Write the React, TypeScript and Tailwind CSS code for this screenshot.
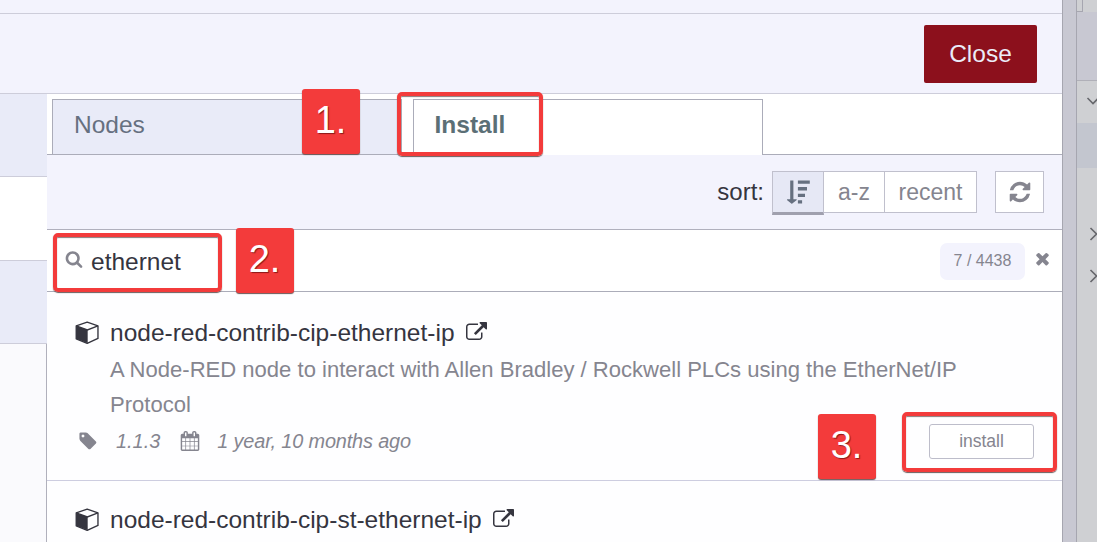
import React from "react";

type IconProps = { className?: string };

function Glyph({ className = "", d }: IconProps & { d: string }) {
  return (
    <svg viewBox="0 0 1792 1792" fill="currentColor" className={`shrink-0 ${className}`} aria-hidden="true">
      <path d={d} />
    </svg>
  );
}

const PATHS = {
  search:
    "M1216 832q0-185-131.5-316.5t-316.5-131.5-316.5 131.5-131.5 316.5 131.5 316.5 316.5 131.5 316.5-131.5 131.5-316.5zm512 832q0 52-38 90t-90 38q-54 0-90-38l-343-342q-179 124-399 124-143 0-273.5-55.5t-225-150-150-225-55.5-273.5 55.5-273.5 150-225 225-150 273.5-55.5 273.5 55.5 225 150 150 225 55.5 273.5q0 220-124 399l343 343q37 37 37 90z",
  times:
    "M1490 1322q0 40-28 68l-136 136q-28 28-68 28t-68-28l-294-294-294 294q-28 28-68 28t-68-28l-136-136q-28-28-28-68t28-68l294-294-294-294q-28-28-28-68t28-68l136-136q28-28 68-28t68 28l294 294 294-294q28-28 68-28t68 28l136 136q28 28 28 68t-28 68l-294 294 294 294q28 28 28 68z",
  refresh:
    "M1639 1056q0 5-1 7-64 268-268 434.5t-478 166.5q-146 0-282.5-55t-243.5-157l-129 129q-19 19-45 19t-45-19-19-45v-448q0-26 19-45t45-19h448q26 0 45 19t19 45-19 45l-137 137q71 66 161 102t187 36q134 0 250-65t186-179q11-17 53-117 8-23 30-23h192q13 0 22.5 9.5t9.5 22.5zm25-800v448q0 26-19 45t-45 19h-448q-26 0-45-19t-19-45 19-45l138-138q-148-137-349-137-134 0-250 65t-186 179q-11 17-53 117-8 23-30 23h-199q-13 0-22.5-9.5t-9.5-22.5v-7q65-268 270-434.5t480-166.5q146 0 284 55.5t245 156.5l130-129q19-19 45-19t45 19 19 45z",
  external:
    "M1408 928v320q0 119-84.5 203.5t-203.5 84.5h-832q-119 0-203.5-84.5t-84.5-203.5v-832q0-119 84.5-203.5t203.5-84.5h704q14 0 23 9t9 23v64q0 14-9 23t-23 9h-704q-66 0-113 47t-47 113v832q0 66 47 113t113 47h832q66 0 113-47t47-113v-320q0-14 9-23t23-9h64q14 0 23 9t9 23zm384-864v512q0 26-19 45t-45 19-45-19l-176-176-652 652q-10 10-23 10t-23-10l-114-114q-10-10-10-23t10-23l652-652-176-176q-19-19-19-45t19-45 45-19h512q26 0 45 19t19 45z",
  calendar:
    "M192 1664h288v-288h-288v288zm352 0h320v-288h-320v288zm-352-352h288v-320h-288v320zm352 0h320v-320h-320v320zm-352-384h288v-288h-288v288zm736 736h320v-288h-320v288zm-384-736h320v-288h-320v288zm768 736h288v-288h-288v288zm-384-352h320v-320h-320v320zm-352-864v-288q0-13-9.5-22.5t-22.5-9.5h-64q-13 0-22.5 9.5t-9.5 22.5v288q0 13 9.5 22.5t22.5 9.5h64q13 0 22.5-9.5t9.5-22.5zm736 864h288v-320h-288v320zm-384-384h320v-288h-320v288zm384 0h288v-288h-288v288zm32-480v-288q0-13-9.5-22.5t-22.5-9.5h-64q-13 0-22.5 9.5t-9.5 22.5v288q0 13 9.5 22.5t22.5 9.5h64q13 0 22.5-9.5t9.5-22.5zm384-64v1280q0 52-38 90t-90 38h-1408q-52 0-90-38t-38-90v-1280q0-52 38-90t90-38h128v-96q0-66 47-113t113-47h64q66 0 113 47t47 113v96h384v-96q0-66 47-113t113-47h64q66 0 113 47t47 113v96h128q52 0 90 38t38 90z",
  tag: "M576 448q0-53-37.5-90.5t-90.5-37.5-90.5 37.5-37.5 90.5 37.5 90.5 90.5 37.5 90.5-37.5 37.5-90.5zm1067 576q0 53-37 90l-491 492q-39 37-91 37-53 0-90-37l-715-716q-38-37-64.5-101t-26.5-117v-416q0-52 38-90t90-38h416q53 0 117 26.5t102 64.5l715 714q37 39 37 91z",
};

function Cube({ className = "" }: IconProps) {
  return (
    <svg viewBox="0 0 24 24" className={`shrink-0 ${className}`} aria-hidden="true">
      <path d="M12.2 1.2 23.2 4.9v12.9L12.2 22.8 1 18.2V4.9Z" fill="none" stroke="currentColor" strokeWidth="1.4" strokeLinejoin="round" />
      <path d="M1 5l11.7 4.2v13.6L1 18.2Z" fill="currentColor" />
      <path d="M1 5l11.4 4.1L23.2 5" fill="none" stroke="currentColor" strokeWidth="1.4" />
    </svg>
  );
}

function SortAmount({ className = "" }: IconProps) {
  return (
    <svg viewBox="0 0 23 24" fill="currentColor" className={`shrink-0 ${className}`} aria-hidden="true">
      <path d="M3.2 0.4h3.2v18.8h3q.7.4.1 1L5.3 23.5q-.5.4-1 0L.2 20.2q-.6-.6.1-1h2.9Z" />
      <path d="M10.9 0.4h11.9v3.4H10.9zM10.9 7.1h9.1v3.3h-9.1zM10.9 13.7h7.1V17h-7.1zM10.9 20.3h4.2v3.1h-4.2z" />
    </svg>
  );
}

function PackageTitle({ name }: { name: string }) {
  return (
    <div className="flex h-9 items-center text-[24.5px] leading-9 text-[#35353f]">
      <Cube className="h-[23.5px] w-6" />
      <span className="ml-[11px] whitespace-nowrap">{name}</span>
      <Glyph d={PATHS.external} className="-mt-px ml-[11px] h-[21px] w-[21px]" />
    </div>
  );
}

function Badge({ children, className }: { children: string; className: string }) {
  return (
    <div
      className={`absolute h-[65px] w-[58px] rounded-[3px] bg-[#f33b3b] pt-1 text-center text-[38px] leading-[54px] text-white shadow-[0_1px_1px_#6b5555] [text-shadow:1px_1px_1px_rgba(70,0,0,0.6)] ${className}`}
    >
      {children}
    </div>
  );
}

function Outline({ className }: { className: string }) {
  return (
    <div className={`absolute rounded-[5px] border-4 border-[#f33b3b] shadow-[0_1px_1px_#6b5b5b,inset_0_1px_1px_#8a7a7a] ${className}`} />
  );
}

function Chevron({ className = "", d }: IconProps & { d: string }) {
  return (
    <svg viewBox="0 0 14 14" fill="none" stroke="#66676c" strokeWidth="1.6" className={`shrink-0 ${className}`} aria-hidden="true">
      <path d={d} />
    </svg>
  );
}

function SideColumn() {
  return (
    <nav className="flex w-[47px] shrink-0 flex-col">
      <div className="h-[83px] border-b border-[#cdcdda] bg-[#e9ebf8]" />
      <div className="h-[84px] border-b border-[#cdcdda] bg-white" />
      <div className="h-[83px] border-b border-[#cdcdda] bg-[#e9ebf8]" />
      <div className="flex-1 border-r border-[#b0b0bc] bg-[#fafafd]" />
    </nav>
  );
}

function Tabs() {
  return (
    <div className="flex h-[61px] shrink-0 pt-[5px]">
      <div className="w-[5px] border-b border-[#abacb9]" />
      <div className="w-[350px] border border-[#abacb9] bg-[#e9ebf8] pl-[21px] text-[24.5px] leading-[49px] text-[#667080]">Nodes</div>
      <div className="w-[11px] border-b border-[#abacb9]" />
      <div className="w-[350px] border border-b-0 border-[#abacb9] bg-white pl-[20.5px] text-[24.5px] font-bold leading-[49px] text-[#5b6f76]">Install</div>
      <div className="flex-1 border-b border-[#abacb9]" />
    </div>
  );
}

function SortBar() {
  return (
    <div className="flex h-[75px] shrink-0 items-start justify-end border-b border-[#b0b0bd] bg-[#f3f3fd] pr-[18px] pt-4 text-[23px] text-[#85858f]">
      <span className="mr-2 text-[24px] leading-[42px] text-[#35353f]">sort:</span>
      <div className="flex h-11">
        <button className="flex h-11 w-[52px] items-center justify-center border border-b-[3px] border-[#c0c0cd] border-b-[#a0a0ae] bg-[#e6e8f5] text-[#667080]">
          <SortAmount className="-mt-px h-6 w-[23px]" />
        </button>
        <button className="h-[42px] w-[61px] border-y border-r border-[#c0c0cd] bg-white leading-10">a-z</button>
        <button className="h-[42px] w-[92px] border-y border-r border-[#c0c0cd] bg-white leading-10">recent</button>
      </div>
      <button className="ml-[18px] flex h-[42px] w-[49px] items-center justify-center border border-[#c0c0cd] bg-white">
        <Glyph d={PATHS.refresh} className="h-6 w-6" />
      </button>
    </div>
  );
}

function SearchBar() {
  return (
    <div className="flex h-[62px] shrink-0 items-center border-b border-[#abacb9] bg-white pl-[18px] pr-[10px]">
      <Glyph d={PATHS.search} className="-mt-1 h-[18px] w-[18px] text-[#85858f]" />
      <span className="ml-2 mt-[2px] text-[24.5px] leading-9 text-[#35353f]">ethernet</span>
      <span className="ml-auto mt-[2px] h-[37px] w-[85px] rounded-[7px] bg-[#f3f3fd] text-center text-[16px] leading-[36px] text-[#85858f]">7 / 4438</span>
      <Glyph d={PATHS.times} className="-mt-1 ml-2 h-[19px] w-[19px] text-[#85858f]" />
    </div>
  );
}

function Results() {
  return (
    <div className="flex flex-1 flex-col bg-[#fefeff]">
      <div className="h-[189px] shrink-0 border-b border-[#cdcde0] pl-7 pt-[23px]">
        <PackageTitle name="node-red-contrib-cip-ethernet-ip" />
        <p className="ml-[35px] mt-[1px] w-[870px] text-[22.06px] leading-[35px] text-[#85858f]">
          A Node-RED node to interact with Allen Bradley / Rockwell PLCs using the EtherNet/IP Protocol
        </p>
        <div className="mt-px flex h-9 items-center pr-7 text-[19.9px] italic text-[#85858f]">
          <Glyph d={PATHS.tag} className="ml-[3px] h-5 w-5" />
          <span className="ml-[18px] mt-[2px]">1.1.3</span>
          <Glyph d={PATHS.calendar} className="ml-5 h-5 w-5" />
          <span className="ml-[17px] mt-[2px] tracking-[-0.15px]">1 year, 10 months ago</span>
          <button className="ml-auto h-[35px] w-[105px] rounded-[3px] border border-[#bdbdca] bg-white text-[17.5px] not-italic leading-[30px]">install</button>
        </div>
      </div>
      <div className="pl-7 pt-[21px]">
        <PackageTitle name="node-red-contrib-cip-st-ethernet-ip" />
      </div>
    </div>
  );
}

function Workspace() {
  return (
    <aside className="flex w-[35px] shrink-0">
      <div className="w-[15px] border-x border-[#a6a6b0] bg-[#c8c8d2]" />
      <div className="flex w-5 flex-col overflow-hidden bg-[#cfd0d3]">
        <div className="h-3 w-[6px] shrink-0 border-b border-r border-[#a6a6b0]" />
        <div className="h-[69px] shrink-0 border-b border-[#b0b0b8] bg-[#c8c8d2]" />
        <div className="h-[42px] shrink-0 pl-[9px] pt-[13px]">
          <Chevron className="h-[14px] w-[14px]" d="M1.5 4 7 9.5 12.5 4" />
        </div>
        <div className="h-[45px] shrink-0 bg-[#c3c6cf]" />
        <div className="flex flex-col gap-7 pl-3 pt-[59px]">
          <Chevron className="h-[14px] w-[14px]" d="M1.5 1 7.5 7 1.5 13" />
          <Chevron className="h-[14px] w-[14px]" d="M1.5 1 7.5 7 1.5 13" />
        </div>
      </div>
    </aside>
  );
}

export default function App() {
  return (
    <div className="relative flex h-[542px] w-[1097px] overflow-hidden bg-white font-['Liberation_Sans',Arial,sans-serif]">
      <main className="flex w-[1062px] shrink-0 flex-col">
        <div className="h-[14px] shrink-0 border-b border-[#cdcdda] bg-[#f3f3fd]" />
        <header className="flex h-20 shrink-0 items-start justify-end border-b border-[#cdcdda] bg-[#f3f3fd] pr-[25px] pt-[11px]">
          <button className="h-[58px] w-[113px] rounded-[2px] bg-[#8c101c] text-[24.5px] leading-[56px] text-[#ebebf8]">Close</button>
        </header>
        <div className="flex min-h-0 flex-1">
          <SideColumn />
          <section className="flex min-w-0 flex-1 flex-col">
            <Tabs />
            <SortBar />
            <SearchBar />
            <Results />
          </section>
        </div>
      </main>
      <Workspace />

      <Outline className="left-[397px] top-[92px] h-[64px] w-[145.5px]" />
      <Outline className="left-[52.5px] top-[233px] h-[59px] w-[169px]" />
      <Outline className="left-[902px] top-[412px] h-[60px] w-[154.5px]" />
      <Badge className="left-[301.5px] top-[89px]">1.</Badge>
      <Badge className="left-[235.5px] top-[228px]">2.</Badge>
      <Badge className="left-[817.5px] top-[414px]">3.</Badge>
    </div>
  );
}
